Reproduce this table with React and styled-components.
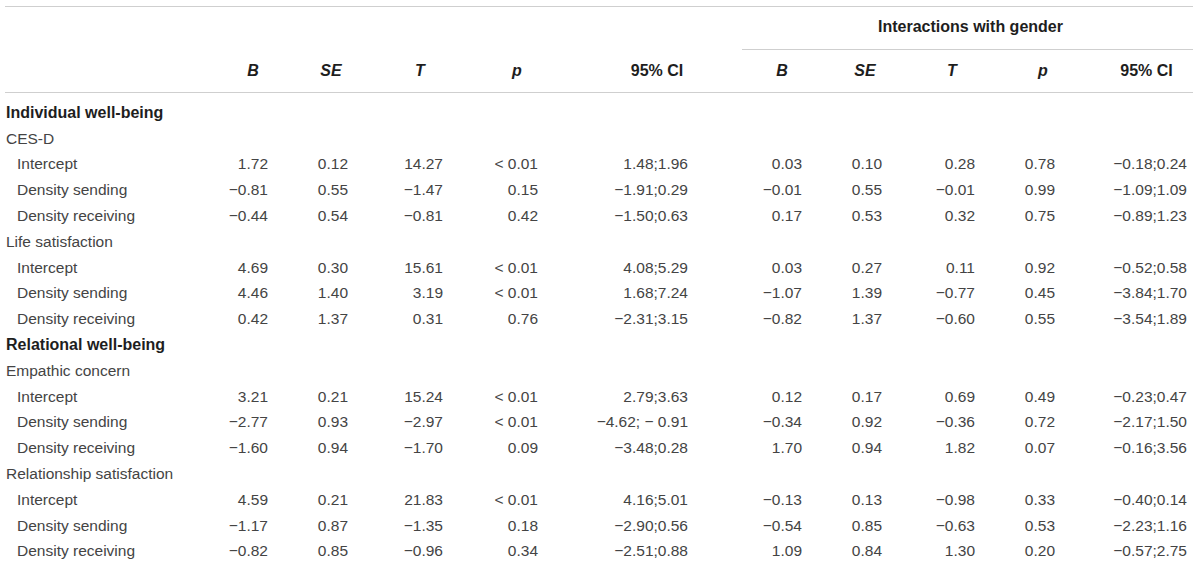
import React from "react";
import styled, { createGlobalStyle } from "styled-components";

const GlobalStyle = createGlobalStyle`
  body {
    margin: 0;
    background: #ffffff;
    font-family: "Liberation Sans", Helvetica, Arial, sans-serif;
    color: #444444;
  }
`;

const COLUMNS = "217px 62px 94px 84px 110px 170px 80px 86px 88px 94px 103px";
const LINE = "#cfcfcf";

const Table = styled.div`
  width: 1188px;
  margin: 6px 0 0 5px;
  border-top: 1px solid ${LINE};
`;

const HeaderRow = styled.div`
  display: grid;
  grid-template-columns: ${COLUMNS};
  height: 43px;
  box-sizing: border-box;
  border-bottom: ${props => (props.ruled ? `1px solid ${LINE}` : "none")};
`;

const GroupHead = styled.div`
  grid-column: 7 / span 5;
  display: flex;
  align-items: center;
  justify-content: center;
  padding: 0 0 2px 6px;
  border-bottom: 1px solid ${LINE};
  font-size: 16px;
  font-weight: bold;
  color: #1e1e1e;
`;

const HeadCell = styled.div`
  display: flex;
  align-items: center;
  justify-content: center;
  padding-left: ${props => props.shift || 0}px;
  font-size: 16px;
  font-weight: bold;
  font-style: ${props => (props.italic ? "italic" : "normal")};
  color: #1e1e1e;
`;

const Body = styled.div`
  padding-top: 7px;
`;

const BodyRow = styled.div`
  display: grid;
  grid-template-columns: ${COLUMNS};
  height: 25.8px;
  align-items: center;
`;

const Label = styled.div`
  padding-left: ${props => (props.level === "item" ? "12px" : "1px")};
  font-size: ${props => (props.level === "section" ? "16px" : "15.5px")};
  font-weight: ${props => (props.level === "section" ? "bold" : "normal")};
  color: ${props => (props.level === "section" ? "#1e1e1e" : "#444444")};
  white-space: nowrap;
`;

const Num = styled.div`
  text-align: right;
  padding-right: ${props => props.pad}px;
  font-size: 15.5px;
  white-space: nowrap;
`;

const heads = [
  { text: "B", italic: true, pad: 16 },
  { text: "SE", italic: true, pad: 30 },
  { text: "T", italic: true, pad: 19 },
  { text: "p", italic: true, pad: 34 },
  { text: "95% CI", italic: false, pad: 54 },
  { text: "B", italic: true, pad: 20 },
  { text: "SE", italic: true, pad: 26 },
  { text: "T", italic: true, pad: 21 },
  { text: "p", italic: true, pad: 35 },
  { text: "95% CI", italic: false, pad: 6, shift: 10 },
];

const rows = [
  { label: "Individual well-being", level: "section" },
  { label: "CES-D", level: "group" },
  { label: "Intercept", level: "item", values: ["1.72", "0.12", "14.27", "< 0.01", "1.48;1.96", "0.03", "0.10", "0.28", "0.78", "−0.18;0.24"] },
  { label: "Density sending", level: "item", values: ["−0.81", "0.55", "−1.47", "0.15", "−1.91;0.29", "−0.01", "0.55", "−0.01", "0.99", "−1.09;1.09"] },
  { label: "Density receiving", level: "item", values: ["−0.44", "0.54", "−0.81", "0.42", "−1.50;0.63", "0.17", "0.53", "0.32", "0.75", "−0.89;1.23"] },
  { label: "Life satisfaction", level: "group" },
  { label: "Intercept", level: "item", values: ["4.69", "0.30", "15.61", "< 0.01", "4.08;5.29", "0.03", "0.27", "0.11", "0.92", "−0.52;0.58"] },
  { label: "Density sending", level: "item", values: ["4.46", "1.40", "3.19", "< 0.01", "1.68;7.24", "−1.07", "1.39", "−0.77", "0.45", "−3.84;1.70"] },
  { label: "Density receiving", level: "item", values: ["0.42", "1.37", "0.31", "0.76", "−2.31;3.15", "−0.82", "1.37", "−0.60", "0.55", "−3.54;1.89"] },
  { label: "Relational well-being", level: "section" },
  { label: "Empathic concern", level: "group" },
  { label: "Intercept", level: "item", values: ["3.21", "0.21", "15.24", "< 0.01", "2.79;3.63", "0.12", "0.17", "0.69", "0.49", "−0.23;0.47"] },
  { label: "Density sending", level: "item", values: ["−2.77", "0.93", "−2.97", "< 0.01", "−4.62; − 0.91", "−0.34", "0.92", "−0.36", "0.72", "−2.17;1.50"] },
  { label: "Density receiving", level: "item", values: ["−1.60", "0.94", "−1.70", "0.09", "−3.48;0.28", "1.70", "0.94", "1.82", "0.07", "−0.16;3.56"] },
  { label: "Relationship satisfaction", level: "group" },
  { label: "Intercept", level: "item", values: ["4.59", "0.21", "21.83", "< 0.01", "4.16;5.01", "−0.13", "0.13", "−0.98", "0.33", "−0.40;0.14"] },
  { label: "Density sending", level: "item", values: ["−1.17", "0.87", "−1.35", "0.18", "−2.90;0.56", "−0.54", "0.85", "−0.63", "0.53", "−2.23;1.16"] },
  { label: "Density receiving", level: "item", values: ["−0.82", "0.85", "−0.96", "0.34", "−2.51;0.88", "1.09", "0.84", "1.30", "0.20", "−0.57;2.75"] },
];

export default function App() {
  return (
    <>
      <GlobalStyle />
      <Table>
        <HeaderRow>
          <GroupHead>Interactions with gender</GroupHead>
        </HeaderRow>
        <HeaderRow ruled>
          <div />
          {heads.map((h, i) => (
            <HeadCell key={i} italic={h.italic} shift={h.shift}>{h.text}</HeadCell>
          ))}
        </HeaderRow>
        <Body>
          {rows.map((row, r) => (
            <BodyRow key={r}>
              <Label level={row.level}>{row.label}</Label>
              {row.values && row.values.map((v, i) => (
                <Num key={i} pad={heads[i].pad}>{v}</Num>
              ))}
            </BodyRow>
          ))}
        </Body>
      </Table>
    </>
  );
}
